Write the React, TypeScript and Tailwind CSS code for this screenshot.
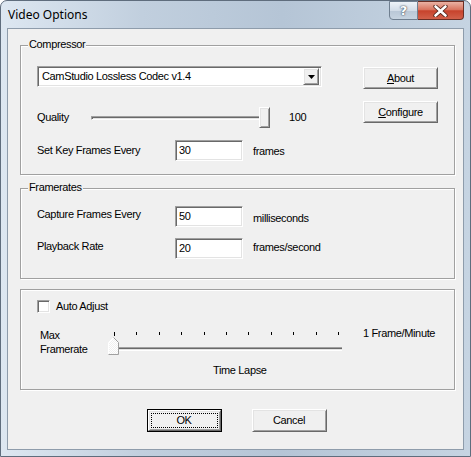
import React from 'react';

const font = "font-['Liberation_Sans',Arial,sans-serif] text-[11px] tracking-[-0.35px] leading-[13px] text-black";
const raised =
  'border border-t-white border-l-white border-r-[#696969] border-b-[#696969] bg-[#f0f0f0] shadow-[inset_1px_1px_0_#e3e3e3,inset_-1px_-1px_0_#a0a0a0]';
const sunken =
  'border border-t-[#a0a0a0] border-l-[#a0a0a0] border-r-white border-b-white shadow-[inset_1px_1px_0_#696969,inset_-1px_-1px_0_#e3e3e3]';

function Group({ label, className, children }: { label: string; className: string; children: React.ReactNode }) {
  return (
    <div
      className={`relative ml-[12px] w-[435px] border border-[#a0a0a0] shadow-[inset_1px_1px_0_#fff,1px_1px_0_#fff] ${className}`}
    >
      {label && <span className="absolute left-[7px] top-[-8px] bg-[#f0f0f0] px-[1px]">{label}</span>}
      {children}
    </div>
  );
}

function Field({ value }: { value: string }) {
  return (
    <div className={`flex h-[21px] w-[68px] items-center bg-white pl-[3px] ${sunken}`}>{value}</div>
  );
}

function Button({ children, className = '' }: { children: React.ReactNode; className?: string }) {
  return (
    <div className={`flex h-[22px] w-[75px] items-center justify-center ${raised} ${className}`}>{children}</div>
  );
}

export default function App() {
  const ticks = Array.from({ length: 11 });
  return (
    <div className={`${font} h-[457px] w-[471px] overflow-hidden`}>
      <div className="flex h-full w-full flex-col rounded-t-[7px] border border-[#5f6d7d] bg-[linear-gradient(90deg,#dde7f1_0%,#c1cfde_30%,#b5c5d6_60%,#c6d4e2_100%)]">
        {/* title bar */}
        <div className="flex h-[27px] items-start justify-between pr-[6px]">
          <span className="pl-[7px] pt-[6px] font-['Noto_Sans',sans-serif] text-[12px] tracking-normal leading-[16px]">Video Options</span>
          <div className="flex">
            <div className="flex h-[19px] w-[29px] items-center justify-center rounded-bl-[4px] border border-[#6f7f90] bg-[linear-gradient(#eef3f8,#d2dce7_50%,#b9c7d6_51%,#c6d3e0)] font-['DejaVu_Sans',sans-serif] text-[13px] font-bold tracking-normal text-white [text-shadow:0_0_2px_#3b4756,0_0_1px_#3b4756]">
              ?
            </div>
            <div className="flex h-[19px] w-[46px] items-center justify-center rounded-br-[4px] border border-l-0 border-[#6b2e24] bg-[linear-gradient(#eab2a4,#d9745f_45%,#c7432c_52%,#d2604a)]">
              <svg width="15" height="12" viewBox="0 0 15 12">
                <path d="M2.5 1.5 L12.5 10.5 M12.5 1.5 L2.5 10.5" stroke="#4a1e16" strokeWidth="4.2" strokeLinecap="round" />
                <path d="M2.5 1.5 L12.5 10.5 M12.5 1.5 L2.5 10.5" stroke="#fff" strokeWidth="2.6" strokeLinecap="round" />
              </svg>
            </div>
          </div>
        </div>

        {/* client area */}
        <div className="mx-[6px] flex h-[422px] flex-col border border-[#8e9cab] bg-[#f0f0f0]">
          {/* Compressor */}
          <Group label="Compressor" className="mt-[16px] h-[130px]">
            <div className="flex">
              <div className="flex flex-col pl-[16px] pt-[20px]">
                <div className={`flex h-[21px] w-[285px] items-center justify-between bg-white pl-[4px] pr-[2px] ${sunken}`}>
                  <span>CamStudio Lossless Codec v1.4</span>
                  <div className={`flex h-[17px] w-[16px] items-center justify-center ${raised}`}>
                    <svg width="7" height="4" viewBox="0 0 7 4">
                      <path d="M0 0 H7 L3.5 4 Z" fill="#000" />
                    </svg>
                  </div>
                </div>
                <div className="mt-[20px] flex h-[21px] items-center">
                  <span className="w-[54px]">Quality</span>
                  <div className="relative flex h-[21px] w-[179px] items-center">
                    <div className={`h-[4px] w-[173px] ${sunken}`} />
                    <div className={`absolute right-0 top-0 h-[21px] w-[11px] ${raised}`} />
                  </div>
                  <span className="ml-[19px]">100</span>
                </div>
                <div className="mt-[12px] flex h-[21px] items-start">
                  <span className="mt-[4px] w-[138px]">Set Key Frames Every</span>
                  <Field value="30" />
                  <span className="ml-[10px] mt-[5px]">frames</span>
                </div>
              </div>
              <div className="ml-[41px] flex flex-col gap-[12px] pt-[21px]">
                <Button>
                  <span><u>A</u>bout</span>
                </Button>
                <Button>
                  <span><u>C</u>onfigure</span>
                </Button>
              </div>
            </div>
          </Group>

          {/* Framerates */}
          <Group label="Framerates" className="mt-[13px] h-[91px]">
            <div className="flex flex-col gap-[11px] pl-[16px] pt-[17px]">
              <div className="flex h-[21px] items-start">
                <span className="mt-[2px] w-[138px]">Capture Frames Every</span>
                <Field value="50" />
                <span className="ml-[10px] mt-[6px]">milliseconds</span>
              </div>
              <div className="flex h-[21px] items-start">
                <span className="mt-[2px] w-[138px]">Playback Rate</span>
                <Field value="20" />
                <span className="ml-[10px] mt-[3px]">frames/second</span>
              </div>
            </div>
          </Group>

          {/* Time lapse */}
          <Group label="" className="mt-[10px] h-[101px]">
            <div className="flex flex-col pl-[16px] pt-[10px]">
              <div className="flex items-center gap-[6px]">
                <div className={`h-[13px] w-[13px] bg-white ${sunken}`} />
                <span>Auto Adjust</span>
              </div>
              <div className="mt-[13px] flex items-start">
                <div className="ml-[3px] mt-[2px] w-[68px] leading-[14px]">
                  Max
                  <br />
                  Framerate
                </div>
                <div className="relative h-[29px] w-[234px]">
                  <div className="mt-[6px] flex h-[3px] justify-between pl-[6px] pr-[3px]">
                    {ticks.map((_, i) => (
                      <div key={i} className={`w-[1px] bg-black ${i === 0 ? 'h-[4px]' : 'h-[3px]'}`} />
                    ))}
                  </div>
                  <div className="ml-[4px] mt-[12px] h-[4px] w-[230px] border-t border-t-[#a0a0a0] border-b border-b-white bg-[#e3e3e3] shadow-[inset_0_1px_0_#696969]" />
                  <svg className="absolute left-0 top-[11px]" width="11" height="18" viewBox="0 0 11 18">
                    <defs>
                      <pattern id="hatch" width="2" height="2" patternUnits="userSpaceOnUse">
                        <rect width="2" height="2" fill="#f0f0f0" />
                        <rect width="1" height="1" fill="#ffffff" />
                        <rect x="1" y="1" width="1" height="1" fill="#ffffff" />
                      </pattern>
                    </defs>
                    <path d="M0.5 17.5 V5.5 L5.5 0.5 L10.5 5.5 V17.5 Z" fill="url(#hatch)" />
                    <path d="M0.5 17.5 V5.5 L5.5 0.5" fill="none" stroke="#ffffff" />
                    <path d="M5.5 0.5 L10.5 5.5 V17.5 H0.5" fill="none" stroke="#a0a0a0" />
                  </svg>
                </div>
                <span className="ml-[21px] leading-[14px]">1 Frame/Minute</span>
              </div>
              <div className="ml-[176px] mt-[8px]">Time Lapse</div>
            </div>
          </Group>

          {/* buttons */}
          <div className="mt-[19px] flex justify-center gap-[30px] pl-[2px]">
            <div className="flex h-[23px] w-[75px] border border-black">
              <div className={`flex flex-1 p-[2px] ${raised}`}>
                <div className="flex flex-1 items-center justify-center border border-dotted border-black">OK</div>
              </div>
            </div>
            <Button className="h-[23px]">Cancel</Button>
          </div>
        </div>
      </div>
    </div>
  );
}
